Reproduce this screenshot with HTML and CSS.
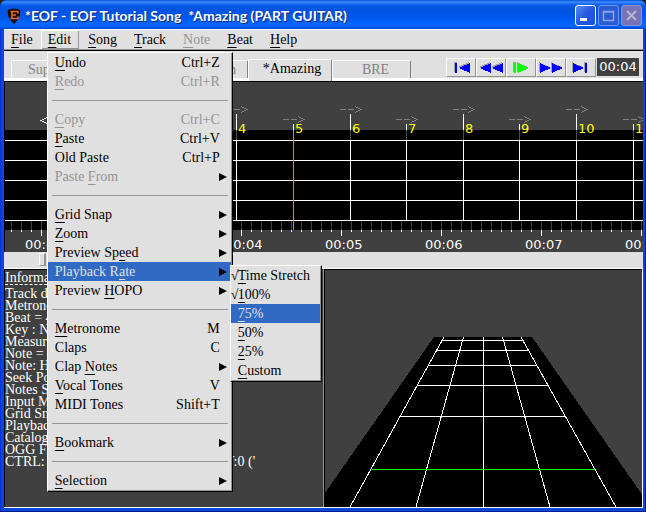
FILE: index.html
```html
<!DOCTYPE html>
<html lang="en">
<head>
<meta charset="utf-8">
<title>EOF</title>
<link rel="stylesheet" href="styles.css">
</head>
<body>
<div class="window">
  <header class="titlebar">
    <svg class="app-icon" width="14" height="16" viewBox="0 0 14 16" aria-hidden="true">
      <path d="M1 2Q7-1 13 2Q14 8 11 11Q9 15 7 16Q5 15 3 11Q0 8 1 2Z" fill="#180c06"/>
      <path d="M3.500 3.500H11V5.500M5 3.500V10.500M3.500 10.500H11V8.500M5 7H9" fill="none" stroke="#e4661c" stroke-width="1.600"/>
    </svg>
    <h1 class="title">*EOF - EOF Tutorial Song &nbsp;*Amazing (PART GUITAR)</h1>
    <div class="controls">
      <button class="ctl" aria-label="Minimize"><svg width="19" height="19"><path d="M4 12h7v3h-7z" fill="#fff"/></svg></button>
      <button class="ctl ctl-dim" aria-label="Maximize" disabled><svg width="19" height="19"><path d="M4.500 5.500h10v9h-10zM4 6h11" fill="none" stroke="#8aa5e6" stroke-width="1.500"/></svg></button>
      <button class="ctl ctl-close" aria-label="Close" disabled><svg width="19" height="19"><path d="M5 5l9 9M14 5l-9 9" fill="none" stroke="#b9b3d6" stroke-width="2"/></svg></button>
    </div>
  </header>
  <div class="client">
    <nav class="menubar">
      <div class="menu"><button class="menu-btn"><u>F</u>ile</button></div>
      <div class="menu">
        <button class="menu-btn open"><u>E</u>dit</button>
        <ul class="dropdown">
          <li><button class="item"><span><u>U</u>ndo</span><span class="key">Ctrl+Z</span></button></li>
          <li><button class="item" disabled><span><u>R</u>edo</span><span class="key">Ctrl+R</span></button></li>
          <li class="sep"></li>
          <li><button class="item" disabled><span><u>C</u>opy</span><span class="key">Ctrl+C</span></button></li>
          <li><button class="item"><span><u>P</u>aste</span><span class="key">Ctrl+V</span></button></li>
          <li><button class="item"><span>Old Paste</span><span class="key">Ctrl+P</span></button></li>
          <li><button class="item parent" disabled><span>Paste <u>F</u>rom</span></button></li>
          <li class="sep"></li>
          <li><button class="item parent"><span><u>G</u>rid Snap</span></button></li>
          <li><button class="item parent"><span><u>Z</u>oom</span></button></li>
          <li><button class="item parent"><span>Preview Sp<u>e</u>ed</span></button></li>
          <li class="has-sub"><button class="item parent active"><span>Playback R<u>a</u>te</span></button>
            <ul class="dropdown submenu">
              <li><button class="item checked"><span><u>T</u>ime Stretch</span></button></li>
              <li><button class="item checked"><span><u>1</u>00%</span></button></li>
              <li><button class="item active"><span><u>7</u>5%</span></button></li>
              <li><button class="item"><span><u>5</u>0%</span></button></li>
              <li><button class="item"><span><u>2</u>5%</span></button></li>
              <li><button class="item"><span><u>C</u>ustom</span></button></li>
            </ul>
          </li>
          <li><button class="item parent"><span>Preview <u>H</u>OPO</span></button></li>
          <li class="sep"></li>
          <li><button class="item"><span><u>M</u>etronome</span><span class="key">M</span></button></li>
          <li><button class="item"><span>Claps</span><span class="key">C</span></button></li>
          <li><button class="item parent"><span>Clap <u>N</u>otes</span></button></li>
          <li><button class="item"><span><u>V</u>ocal Tones</span><span class="key">V</span></button></li>
          <li><button class="item"><span>MIDI Tones</span><span class="key">Shift+T</span></button></li>
          <li class="sep"></li>
          <li><button class="item parent"><span><u>B</u>ookmark</span></button></li>
          <li class="sep"></li>
          <li><button class="item parent"><span><u>S</u>election</span></button></li>
        </ul>
      </div>
      <div class="menu"><button class="menu-btn"><u>S</u>ong</button></div>
      <div class="menu"><button class="menu-btn"><u>T</u>rack</button></div>
      <div class="menu"><button class="menu-btn" disabled><u>N</u>ote</button></div>
      <div class="menu"><button class="menu-btn"><u>B</u>eat</button></div>
      <div class="menu"><button class="menu-btn"><u>H</u>elp</button></div>
    </nav>
    <div class="toolbar">
      <div class="tabs">
        <button class="tab">Supaeasy</button>
        <button class="tab">Easy</button>
        <button class="tab">Medium</button>
        <button class="tab current">*Amazing</button>
        <button class="tab">BRE</button>
      </div>
      <div class="transport">
        <button class="play" aria-label="Start"><svg width="28" height="17"><path class="shade" d="M7 3h3v10h-3zM22 3v10l-11-5z"/><path class="ink" d="M8 4h2v10h-2zM23 4v10l-11-5z"/></svg></button>
        <button class="play" aria-label="Rewind"><svg width="28" height="17"><path class="shade" d="M13 3v10l-11-5zM25 3v10l-11-5z"/><path class="ink" d="M14 4v10l-11-5zM26 4v10l-11-5z"/></svg></button>
        <button class="play go" aria-label="Play"><svg width="28" height="17"><path class="shade" d="M6 3h3v10h-3zM10 3v10l11-5z"/><path class="ink" d="M7 4h2v10h-2zM11 4v10l11-5z"/></svg></button>
        <button class="play" aria-label="Forward"><svg width="28" height="17"><path class="shade" d="M2 3v10l11-5zM14 3v10l11-5z"/><path class="ink" d="M3 4v10l11-5zM15 4v10l11-5z"/></svg></button>
        <button class="play" aria-label="End"><svg width="28" height="17"><path class="shade" d="M5 3v10l11-5zM17 3h3v10h-3z"/><path class="ink" d="M6 4v10l11-5zM18 4h2v10h-2z"/></svg></button>
        <output class="clock">00:04</output>
      </div>
    </div>
    <svg class="timeline" width="100%" height="170">
      <defs>
        <pattern id="ticks" x="6" y="139" width="10" height="12" patternUnits="userSpaceOnUse">
          <path d="M0 0h1v9h-1z" fill="#404040"/><path d="M0 9h1v2h-1z" fill="#fff"/>
        </pattern>
      </defs>
      <rect width="100%" height="170" fill="#404040"/>
      <rect y="48" width="100%" height="100" fill="#000"/>
      <rect y="139" width="100%" height="12" fill="url(#ticks)"/>
      <g fill="#fff">
        <rect y="58" width="100%" height="1"/><rect y="78" width="100%" height="1"/>
        <rect y="98" width="100%" height="1"/><rect y="118" width="100%" height="1"/>
        <rect y="138" width="100%" height="1"/>
        <path d="M36 148h1v6h-1zM136 148h1v6h-1zM236 148h1v6h-1zM336 148h1v6h-1zM436 148h1v6h-1zM536 148h1v6h-1zM636 148h1v6h-1z"/>
        <path d="M231 32h1v16h-1zM345 32h1v16h-1zM458 32h1v16h-1zM571 32h1v16h-1zM288 42h1v6h-1zM401 42h1v6h-1zM514 42h1v6h-1zM628 42h1v6h-1z"/>
        <path d="M231 58h1v81h-1zM345 58h1v81h-1zM458 58h1v81h-1zM571 58h1v81h-1zM401 58h1v81h-1zM514 58h1v81h-1zM628 58h1v81h-1z"/>
      </g>
      <path d="M231 48h1v10h-1zM345 48h1v10h-1zM458 48h1v10h-1zM571 48h1v10h-1zM401 48h1v10h-1zM514 48h1v10h-1zM628 48h1v10h-1z" fill="#505050"/>
      <rect x="288" y="48" width="1" height="100" fill="#0f0"/>
      <g fill="none" stroke="#808080">
        <path id="arrow" d="M221 27.500h6m2 0h6M236 24.500l6 3l-6 3"/>
        <use href="#arrow" x="114"/><use href="#arrow" x="227"/><use href="#arrow" x="340"/>
        <use href="#arrow" x="57" y="10"/><use href="#arrow" x="170" y="10"/><use href="#arrow" x="283" y="10"/><use href="#arrow" x="397" y="10"/>
        <path d="M42 35.500l-6 3l6 3" stroke="#fff"/>
      </g>
      <g class="beats">
        <text x="233" y="51">4</text><text x="290" y="51">5</text><text x="347" y="51">6</text><text x="403" y="51">7</text>
        <text x="460" y="51">8</text><text x="516" y="51">9</text><text x="573" y="51">10</text><text x="630" y="51">11</text>
      </g>
      <g class="times">
        <text x="20" y="167">00:02</text><text x="120" y="167">00:03</text><text x="220" y="167">00:04</text><text x="320" y="167">00:05</text>
        <text x="420" y="167">00:06</text><text x="520" y="167">00:07</text><text x="620" y="167">00:08</text>
      </g>
    </svg>
    <div class="seek"><button class="thumb" aria-label="Seek position"></button></div>
    <main class="panes">
      <section class="info">
        <h2 class="info-title">Information Panel</h2>
        <p>Track difficulty: 3</p>
        <p>Metronome = Off</p>
        <p>Beat = 4 : BPM = 106</p>
        <p>Key : None</p>
        <p>Measure = 2</p>
        <p>Note = None</p>
        <p>Note: HOPO = Off</p>
        <p>Seek Position = 00:04</p>
        <p>Notes Selected = 0</p>
        <p>Input Mode: Piano Roll</p>
        <p>Grid Snap: Off</p>
        <p>Playback Speed = 100%</p>
        <p>Catalog: 0 of 0</p>
        <p>OGG File: "guitar.ogg"</p>
        <p>CTRL: 0 SHIFT:0 ALT: 0 CODE:0 KEY:0 ('</p>
      </section>
      <section class="preview">
        <svg class="neck" viewBox="-1 -1 318 237" preserveAspectRatio="xMidYMax slice" aria-label="3D preview">
          <path d="M109 67h98l109 156v14h-316v-14z" fill="#000"/>
          <path d="M118 70.500h81M112 80.500h92M104 95.500h108M93 115.500h130M75 145.500h165M119 67L25 237M138.500 67L91 237M158.500 67V237M177.500 67L225 237M196 67L291 237" fill="none" stroke="#fff"/>
          <path d="M47 198.500h223" stroke="#0f0"/>
        </svg>
      </section>
    </main>
  </div>
</div>
</body>
</html>
```
FILE: styles.css
```css
* { box-sizing: border-box; }
body { margin: 0; background: #222; }
button { font: inherit; color: inherit; margin: 0; padding: 0; border: 0; background: none; }
u { text-underline-offset: 3px; text-decoration-skip-ink: none; text-decoration-thickness: 1px; }
svg { display: block; shape-rendering: crispEdges; }

.window {
  height: 100vh;
  display: flex;
  flex-direction: column;
  background: #0a48d8;
  border-radius: 7px 7px 0 0;
  overflow: hidden;
  padding: 0 3px 4px 4px;
  box-shadow: inset -1px -1px #001a90, inset 1px 0 #0831d9;
  font: 14px/19px "Liberation Serif", serif;
  color: #000;
}
.titlebar {
  flex: none;
  height: 29px;
  margin: 0 -3px 0 -4px;
  padding: 2px 4px 0 7px;
  display: flex;
  align-items: center;
  gap: 4px;
  background: linear-gradient(#0850d8 0, #3c8cff 2px, #0a5ce8 5px, #0052e0 10px, #0058ee 18px, #0068ff 24px, #0060f8 27px, #0040c0 29px);
}
.app-icon { shape-rendering: auto; }
.title {
  flex: 1;
  margin: 0;
  font: bold 14px/18px Lato, sans-serif;
  color: #fff;
  text-shadow: 1px 1px #0a2a80;
  white-space: nowrap;
}
.controls { display: flex; gap: 2px; }
.ctl {
  width: 21px;
  height: 21px;
  border: 1px solid #fff;
  border-radius: 3px;
  background: linear-gradient(135deg, #5a8cf4, #2458e0 50%, #1c50d8);
}
.ctl svg { shape-rendering: auto; }
.ctl-dim { border-color: #6f94ea; background: #2a5ad4; }
.ctl-close { border-color: #8d94d0; background: #7872b8; }

.client { flex: 1; min-height: 0; display: flex; flex-direction: column; background: #e0e0e0; }
.menubar {
  flex: none;
  display: flex;
  height: 22px;
  border-top: 1px solid #fff;
  border-bottom: 1px solid #000;
  box-shadow: inset 0 -1px #949494;
}
.menu { position: relative; }
.menu-btn { height: 19px; padding: 0 8px 0 7px; border: 1px solid transparent; border-width: 0 1px; line-height: 17px; display: block; }
.menu:first-child .menu-btn { padding: 0 6px; }
.menu-btn.open { box-shadow: inset 1px 1px #fff, inset -1px -1px #949494; }
.menu-btn:disabled, .item:disabled { color: #949494; }

.dropdown {
  position: absolute;
  z-index: 2;
  top: 22px;
  left: 7px;
  width: 186px;
  margin: 0;
  padding: 0 1px 1px 0;
  list-style: none;
  background: #e0e0e0;
  border: 1px solid #fff;
  border-right-color: #000;
  border-bottom-color: #000;
  box-shadow: inset -1px -1px #949494;
}
.item {
  width: 100%;
  height: 19px;
  padding: 0 11px 0 7px;
  display: flex;
  justify-content: space-between;
  align-items: center;
  line-height: 17px;
  text-align: left;
  white-space: nowrap;
}
.item.parent { padding-right: 4px; }
.item.parent::after {
  content: "";
  border: solid transparent;
  border-width: 4px 0 4px 8px;
  border-left-color: #000;
}
.item.active { background: #316ac5; color: #e0e0e0; }
.sep { height: 19px; padding: 9px 3px 0 4px; }
.sep::before { content: ""; display: block; height: 1px; background: #949494; }
.has-sub { position: relative; }
.submenu { top: 3px; left: 182px; width: 92px; }
.item.checked { padding-left: 0; justify-content: flex-start; }
.item.checked::before { content: "√"; width: 7px; flex: none; }

.toolbar {
  flex: none;
  height: 31px;
  padding: 6px 4px 0 7px;
  display: flex;
  justify-content: space-between;
  align-items: flex-end;
  border-bottom: 1px solid #000;
  box-shadow: inset 0 -3px #fff;
}
.tabs { display: flex; align-items: flex-end; flex: none; }
.tab {
  width: 79px;
  height: 18px;
  margin-bottom: 3px;
  padding-left: 8px;
  border: solid #fff;
  border-width: 1px 1px 0;
  border-right-color: #808080;
  border-radius: 2px 2px 0 0;
  color: #808080;
  text-align: center;
  line-height: 18px;
}
.tab.current { width: 84px; height: 22px; margin-bottom: 0; background: #e0e0e0; color: #000; line-height: 17px; padding: 0 0 4px 4px; }
.transport { display: flex; align-items: flex-start; height: 23px; }
.play { width: 30px; height: 19px; border: 1px solid #fff; border-right-color: #949494; border-bottom-color: #949494; }
.shade { fill: #a0a0a0; }
.ink { fill: #00f; }
.go .ink { fill: #0f0; }
.clock { margin-left: 1px; width: 42px; height: 18px; background: #404040; color: #fff; font: 13px/18px "DejaVu Sans", sans-serif; text-align: center; }

.timeline { flex: none; border-left: 1px solid #000; }
.beats { font: 13px "DejaVu Sans", sans-serif; fill: #ff0; }
.times { font: 13px "DejaVu Sans", sans-serif; fill: #fff; }
.seek { flex: none; height: 17px; padding: 1px 0 2px 35px; border-bottom: 1px solid #fff; }
.thumb { display: block; width: 7px; height: 13px; border: 1px solid #fff; border-right: 2px solid #949494; border-bottom-color: #949494; }
.panes { flex: 1; min-height: 0; display: flex; background: #404040; border-bottom: 1px solid #fff; }
.info {
  flex: 1;
  min-width: 0;
  overflow: hidden;
  padding-top: 2px;
  border: solid #000;
  border-width: 1px 0 0 1px;
  color: #fff;
  line-height: 12px;
  white-space: nowrap;
}
.info p { margin: 0; }
.info-title { margin: 0 0 3px; width: 106px; font: inherit; border-bottom: 1px dashed #fff; }
.preview { flex: 1; min-width: 0; border-left: 1px solid #949494; border-right: 1px solid #fff; box-shadow: inset 1px 1px #000; }
.neck { width: 100%; height: 100%; }
```
